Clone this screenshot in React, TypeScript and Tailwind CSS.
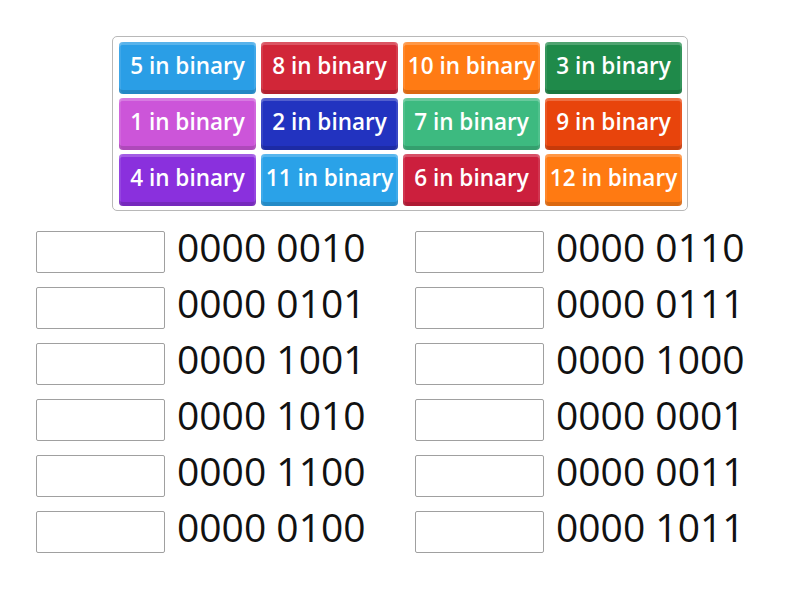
import React from "react";

const tiles: { label: string; cls: string }[] = [
  { label: "5 in binary", cls: "bg-[#2a9ee6]" },
  { label: "8 in binary", cls: "bg-[#d12638]" },
  { label: "10 in binary", cls: "bg-[#ff7b14]" },
  { label: "3 in binary", cls: "bg-[#1f8a4a]" },
  { label: "1 in binary", cls: "bg-[#cc55d9]" },
  { label: "2 in binary", cls: "bg-[#2233c0]" },
  { label: "7 in binary", cls: "bg-[#3dba80]" },
  { label: "9 in binary", cls: "bg-[#e8440c]" },
  { label: "4 in binary", cls: "bg-[#8a30dd]" },
  { label: "11 in binary", cls: "bg-[#2aa2e8]" },
  { label: "6 in binary", cls: "bg-[#cc1f3d]" },
  { label: "12 in binary", cls: "bg-[#ff7a12]" },
];

const left = ["0000 0010", "0000 0101", "0000 1001", "0000 1010", "0000 1100", "0000 0100"];
const right = ["0000 0110", "0000 0111", "0000 1000", "0000 0001", "0000 0011", "0000 1011"];

function Column({ items }: { items: string[] }) {
  return (
    <div className="flex flex-col gap-[14px] w-[379px]">
      {items.map((t) => (
        <div key={t} className="flex items-start h-[42px]">
          <div className="w-[129px] h-[42px] border border-[#a0a0a0] rounded-[2px] bg-white shrink-0" />
          <div className="ml-[12px] mt-[-4px] text-[39px] leading-none text-[#111] whitespace-nowrap">{t}</div>
        </div>
      ))}
    </div>
  );
}

export default function App() {
  return (
    <div
      className="w-[800px] h-[600px] bg-white overflow-hidden"
      style={{ fontFamily: '"Open Sans", sans-serif' }}
    >
      <div className="pt-[36px]">
        <div className="mx-auto w-[576px] border border-[#b8b8b8] rounded-[5px] pl-[6px] pr-[5px] pt-[5px] pb-[4px] grid grid-cols-[repeat(4,137px)] gap-x-[5px] gap-y-[4px]">
          {tiles.map((t) => (
            <div
              key={t.label}
              className={`${t.cls} h-[52px] rounded-[4px] flex items-center justify-center text-white font-semibold text-[22.5px] leading-none whitespace-nowrap shadow-[inset_0_3px_0_rgba(255,255,255,0.22),inset_0_-4px_0_rgba(0,0,0,0.14),inset_2px_0_0_rgba(255,255,255,0.1),inset_-2px_0_0_rgba(255,255,255,0.1)]`}
            >
              <span className="-mt-[3px]">{t.label}</span>
            </div>
          ))}
        </div>
      </div>
      <div className="flex ml-[36px] mt-[20px]">
        <Column items={left} />
        <Column items={right} />
      </div>
    </div>
  );
}
